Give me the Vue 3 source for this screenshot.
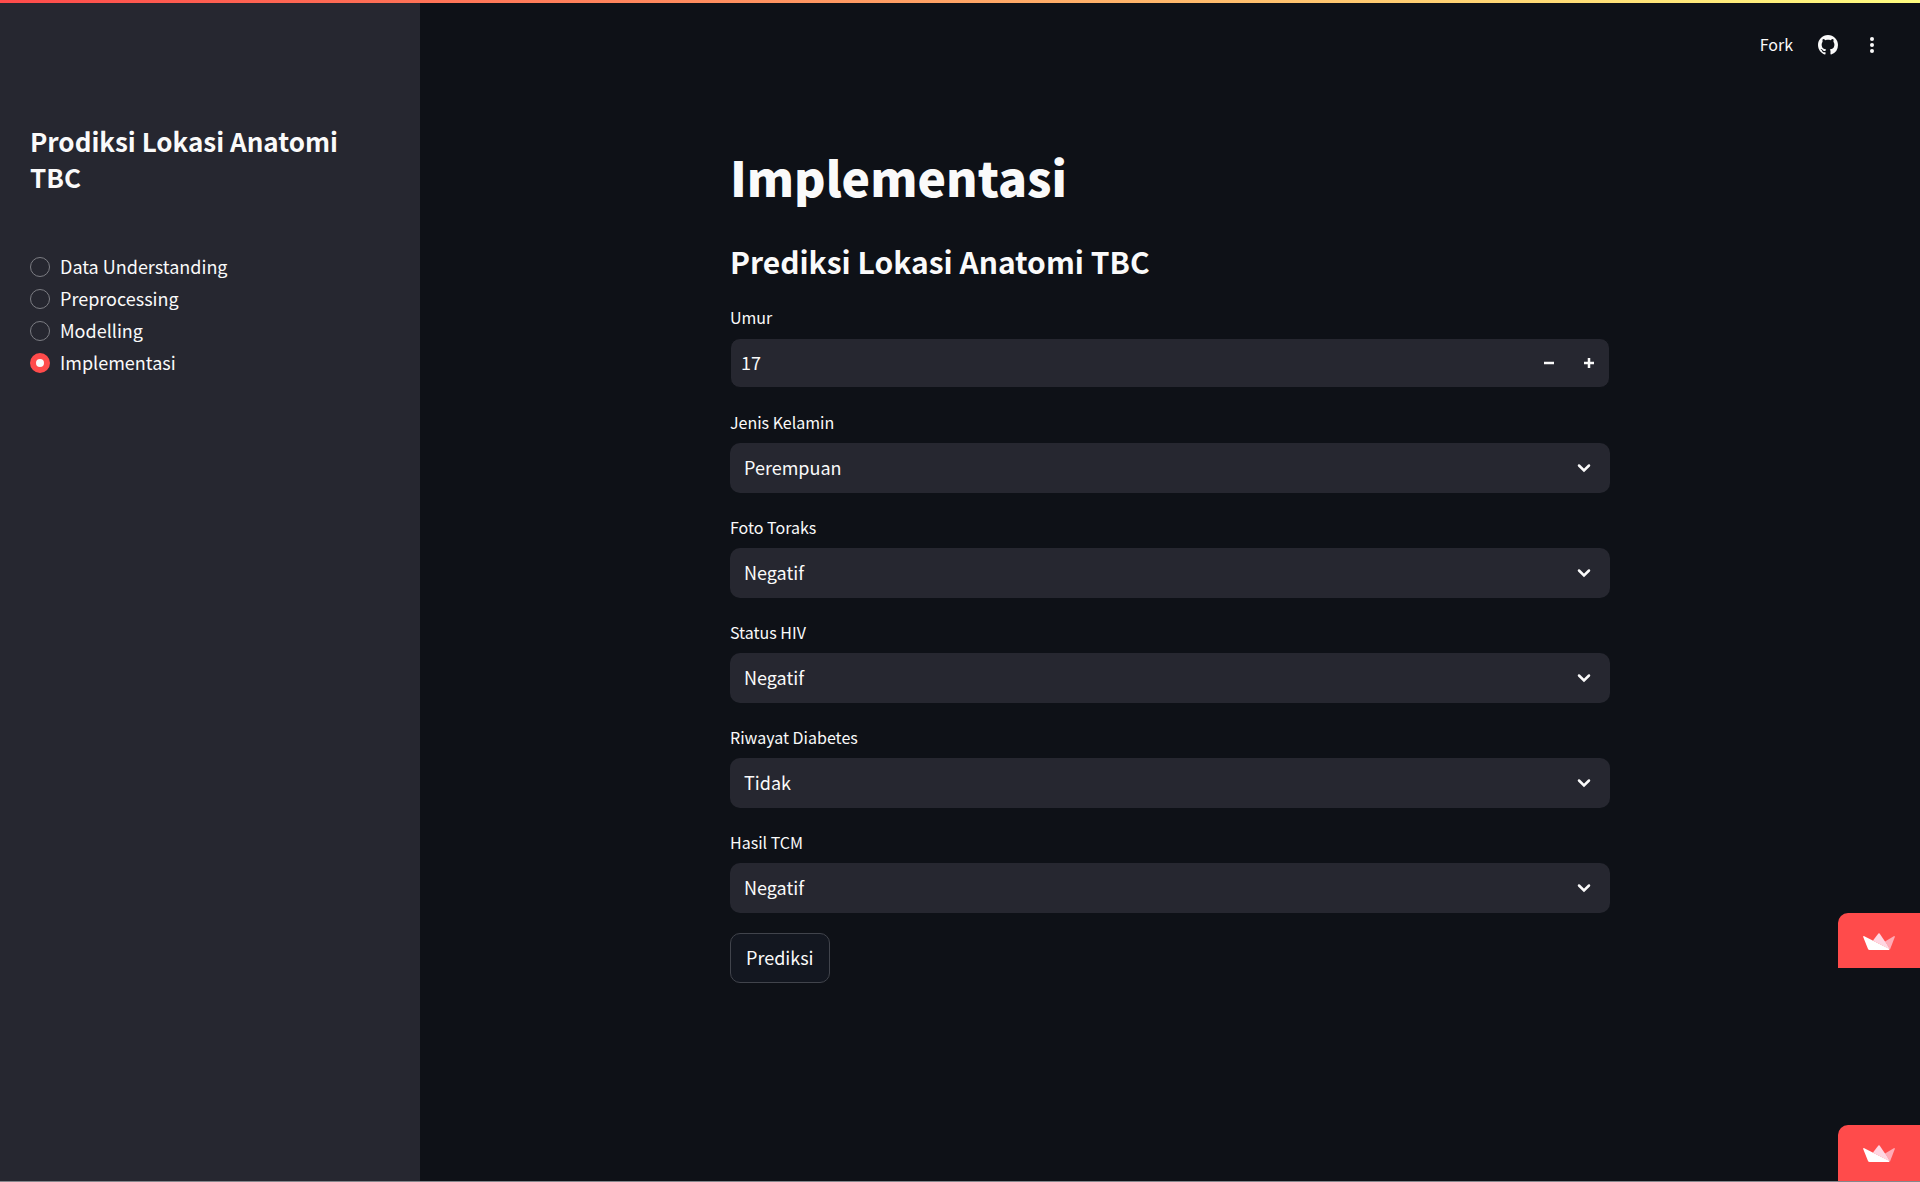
<script setup>
import { ref } from 'vue'

const pages = ['Data Understanding', 'Preprocessing', 'Modelling', 'Implementasi']
const page = ref('Implementasi')
const age = ref(17)
const fields = ref([
  { id: 'gender', label: 'Jenis Kelamin', value: 'Perempuan', options: ['Perempuan', 'Laki-laki'] },
  { id: 'thorax', label: 'Foto Toraks', value: 'Negatif', options: ['Negatif', 'Positif'] },
  { id: 'hiv', label: 'Status HIV', value: 'Negatif', options: ['Negatif', 'Positif'] },
  { id: 'diabetes', label: 'Riwayat Diabetes', value: 'Tidak', options: ['Tidak', 'Ya'] },
  { id: 'tcm', label: 'Hasil TCM', value: 'Negatif', options: ['Negatif', 'Positif'] },
])
</script>

<template>
  <div class="app">
    <div class="decoration"></div>
    <aside class="sidebar">
      <h2 class="sidebar-title">Prodiksi Lokasi Anatomi TBC</h2>
      <div class="radios" role="radiogroup" aria-label="Menu">
        <label v-for="p in pages" :key="p" class="radio">
          <input v-model="page" type="radio" name="page" :value="p" />
          <span>{{ p }}</span>
        </label>
      </div>
    </aside>

    <div class="content">
      <header class="toolbar">
        <button type="button" class="fork">Fork</button>
        <a href="#" class="icon-link" aria-label="GitHub">
          <svg width="20" height="20" viewBox="0 0 16 16" fill="currentColor">
            <path d="M8 0C3.58 0 0 3.58 0 8c0 3.54 2.29 6.53 5.47 7.59.4.07.55-.17.55-.38 0-.19-.01-.82-.01-1.49-2.01.37-2.53-.49-2.69-.94-.09-.23-.48-.94-.82-1.13-.28-.15-.68-.52-.01-.53.63-.01 1.08.58 1.23.82.72 1.21 1.87.87 2.33.66.07-.52.28-.87.51-1.07-1.78-.2-3.64-.89-3.64-3.95 0-.87.31-1.59.82-2.15-.08-.2-.36-1.02.08-2.12 0 0 .67-.21 2.2.82.64-.18 1.32-.27 2-.27s1.36.09 2 .27c1.53-1.04 2.2-.82 2.2-.82.44 1.1.16 1.92.08 2.12.51.56.82 1.27.82 2.15 0 3.07-1.87 3.75-3.65 3.95.29.25.54.73.54 1.48 0 1.07-.01 1.93-.01 2.2 0 .21.15.46.55.38A8.01 8.01 0 0 0 16 8c0-4.42-3.58-8-8-8z" />
          </svg>
        </a>
        <button type="button" class="icon-link" aria-label="Menu utama">
          <svg width="24" height="24" viewBox="0 0 24 24" fill="currentColor">
            <circle cx="12" cy="6" r="2" />
            <circle cx="12" cy="12" r="2" />
            <circle cx="12" cy="18" r="2" />
          </svg>
        </button>
      </header>

      <main class="main">
        <h1>Implementasi</h1>
        <h2 class="subtitle">Prediksi Lokasi Anatomi TBC</h2>
        <form class="form" @submit.prevent>
          <div class="field">
            <label for="age">Umur</label>
            <div class="control number">
              <input id="age" v-model.number="age" type="number" min="0" />
              <button type="button" aria-label="Kurangi" @click="age--">
                <svg width="10" height="10" viewBox="0 0 10 10" stroke-width="2.5"><path d="M0 5h10" /></svg>
              </button>
              <button type="button" aria-label="Tambah" @click="age++">
                <svg width="10" height="10" viewBox="0 0 10 10" stroke-width="2.5"><path d="M0 5h10M5 0v10" /></svg>
              </button>
            </div>
          </div>
          <div v-for="f in fields" :key="f.id" class="field">
            <label :for="f.id">{{ f.label }}</label>
            <div class="control">
              <select :id="f.id" v-model="f.value">
                <option v-for="o in f.options" :key="o">{{ o }}</option>
              </select>
              <svg class="chevron" width="14" height="10" viewBox="0 0 14 10" stroke-width="2.5">
                <path d="M2 2.5l5 5 5-5" />
              </svg>
            </div>
          </div>
          <button type="submit" class="submit">Prediksi</button>
        </form>
      </main>
    </div>

    <a v-for="place in ['upper', 'lower']" :key="place" href="#" class="badge" :class="place" aria-label="Streamlit">
      <svg width="32" height="17" viewBox="0 0 32 17">
        <path d="M10 7.5L15.4.4Q16 0 16.6.4L22 8.5 26 15z" fill="#ffd6e2" />
        <path d="M31.2 3Q32 3 31.8 4L27 16.5 22 8.5z" fill="#ffabb6" />
        <path d="M10 7.5L22 8.5 27 16.5z" fill="#ffd6e2" />
        <path d="M.8 3L26.500 16 26 17H6.5Q5.500 17 5 16L.2 4Q0 3 .8 3z" fill="#fff" />
      </svg>
    </a>
  </div>
</template>

<style>
body {
  margin: 0;
  background: #0e1117;
}
</style>

<style scoped>
.app {
  box-sizing: border-box;
  display: flex;
  min-height: 100vh;
  background: #0e1117;
  color: #fafafa;
  font: 400 18px/32px "Noto Sans CJK SC", "Noto Sans", sans-serif;
  border-bottom: 1px solid #85868c;
}
.decoration {
  position: fixed;
  top: 0;
  left: 0;
  right: 0;
  height: 3px;
  background: linear-gradient(90deg, #ff4b4b, #fffd80);
  z-index: 2;
}
.sidebar {
  box-sizing: border-box;
  flex: 0 0 420px;
  padding: 123px 30px 40px;
  background: #262730;
}
h1,
h2 {
  margin: 0;
}
.sidebar-title {
  font-size: 26px;
  line-height: 36px;
  font-weight: 700;
}
.radios {
  display: flex;
  flex-direction: column;
  margin-top: 56px;
}
.radio {
  display: flex;
  align-items: center;
  gap: 10px;
  height: 32px;
}
.radio span {
  padding-bottom: 2px;
}
.radio input {
  appearance: none;
  box-sizing: border-box;
  width: 20px;
  height: 20px;
  margin: 0;
  border: 1px solid #7c7d83;
  border-radius: 50%;
}
.radio input:checked {
  border: 6px solid #ff4b4b;
  background: #fafafa;
}
.content {
  flex: 1;
  min-width: 0;
}
.toolbar {
  display: flex;
  align-items: center;
  justify-content: flex-end;
  gap: 22px;
  height: 90px;
  padding-right: 36px;
}
button {
  padding: 0;
  border: 0;
  background: none;
  color: inherit;
  font: inherit;
}
.fork {
  padding: 0 3px 2px 0;
  font-size: 16px;
}
.icon-link {
  display: flex;
  color: #fafafa;
}
.main {
  box-sizing: border-box;
  max-width: 920px;
  margin: 0 auto;
  padding: 53px 20px 40px;
}
h1 {
  font-size: 48px;
  line-height: 66px;
  font-weight: 900;
}
.subtitle {
  margin-top: 31px;
  font-size: 30px;
  line-height: 42px;
  font-weight: 700;
}
.form {
  display: flex;
  flex-direction: column;
  align-items: flex-start;
  gap: 20px;
  margin-top: 21px;
}
.field {
  width: 100%;
}
.field label {
  display: block;
  height: 35px;
  font-size: 16px;
  line-height: 28px;
}
.control {
  box-sizing: border-box;
  position: relative;
  display: flex;
  height: 50px;
  border-radius: 10px;
  background: #262730;
}
.number {
  border: 1px solid #0e1117;
}
.control input,
.control select {
  appearance: none;
  flex: 1;
  min-width: 0;
  margin: 0;
  padding: 0 14px 2px;
  border: 0;
  border-radius: 10px;
  background: none;
  color: inherit;
  font: inherit;
}
.control input {
  appearance: textfield;
  padding: 0 10px 2px;
}
.control input::-webkit-inner-spin-button {
  appearance: none;
}
.control option {
  background: #262730;
}
.control button {
  display: flex;
  align-items: center;
  justify-content: center;
  width: 40px;
}
.control path {
  fill: none;
  stroke: #fafafa;
}
.control .chevron {
  position: absolute;
  top: 20px;
  right: 19px;
  pointer-events: none;
}
.control .chevron path {
  stroke-linecap: round;
}
.submit {
  height: 50px;
  padding: 0 15px 2px;
  border: 1px solid #41444c;
  border-radius: 10px;
  background: #131720;
}
.badge {
  position: fixed;
  right: 0;
  display: flex;
  box-sizing: border-box;
  width: 82px;
  height: 55px;
  padding: 20px 0 0 25px;
  border-radius: 10px 0 0 0;
  background: #ff4b4b;
}
.upper {
  bottom: 214px;
}
.lower {
  bottom: 1px;
  height: 56px;
}
</style>
